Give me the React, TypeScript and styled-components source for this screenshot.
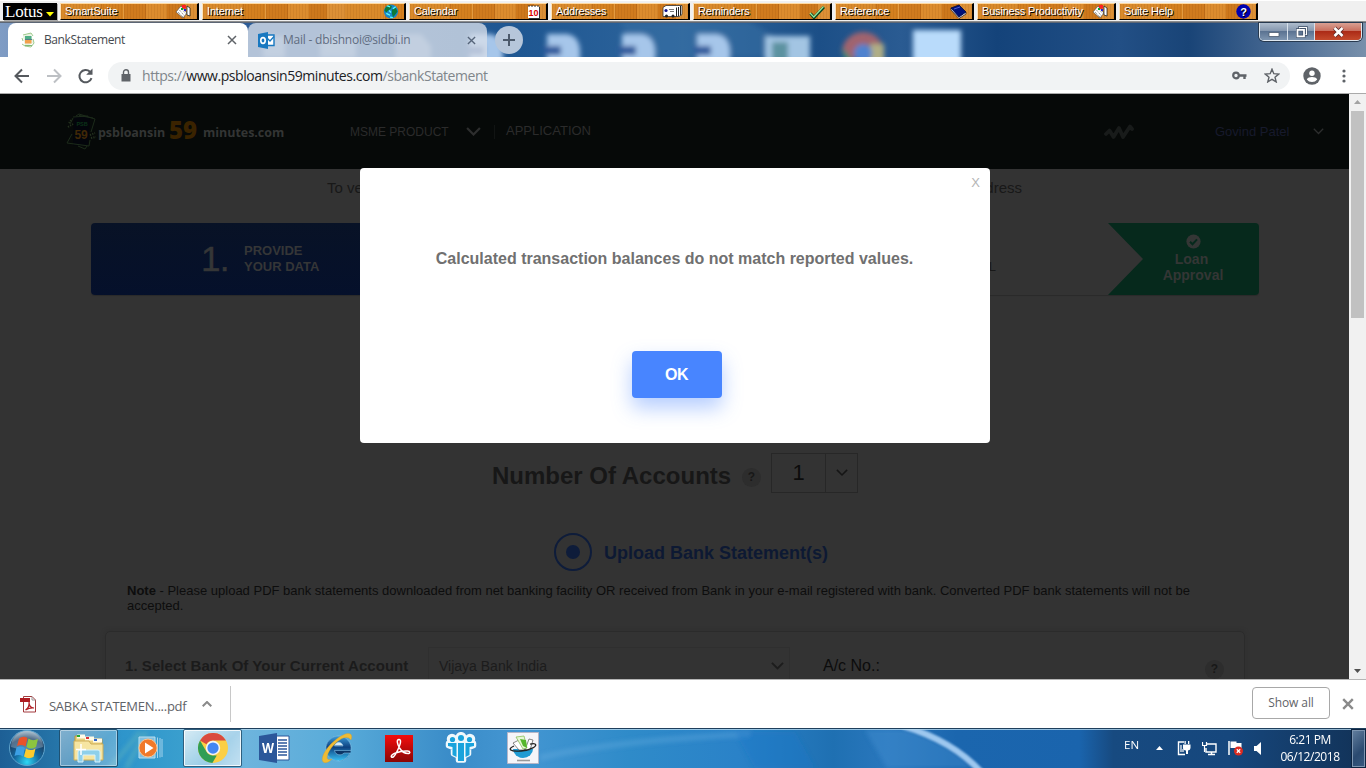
import React from "react";
import styled, { createGlobalStyle } from "styled-components";

const Global = createGlobalStyle`
  * { box-sizing: border-box; }
  body { margin: 0; overflow: hidden; background: #fff; }
  svg { display: block; flex: none; }
`;

const UI = `"Open Sans", "Noto Sans", sans-serif`;
const ARIAL = `"Liberation Sans", Arial, sans-serif`;

const Screen = styled.div`
  width: 1366px;
  height: 768px;
  display: flex;
  flex-direction: column;
  overflow: hidden;
  font-family: ${ARIAL};
`;

/* ---------- Lotus SmartCenter bar ---------- */

const LotusBar = styled.div`
  height: 22px;
  flex: none;
  display: flex;
  align-items: flex-start;
  gap: 3px;
  padding: 3px 0 0 3px;
  background: #f0f0f0;
  border-bottom: 1px solid #8d8d8d;
  box-shadow: inset 0 1px #fff;
`;

const LotusLogo = styled.div`
  width: 54px;
  height: 17px;
  display: flex;
  align-items: center;
  justify-content: space-between;
  padding: 0 3px 0 2px;
  background: #000;
  color: #fff;
  font: 17px/17px "Liberation Serif", serif;
  letter-spacing: -0.2px;
  box-shadow: 1px 1px #aaa;
`;

const Drawer = styled.div<{ $w?: number }>`
  width: ${(p) => p.$w ?? 139}px;
  height: 17px;
  display: flex;
  align-items: center;
  justify-content: space-between;
  padding: 0 5px 0 4px;
  color: #fff;
  font: 11px/15px ${ARIAL};
  letter-spacing: -0.18px;
  white-space: nowrap;
  text-shadow: 1px 1px #000;
  border: 1px solid;
  border-color: #ffd9a0 #000 #000 #ffe3b8;
  border-right-width: 2px;
  background:
    repeating-linear-gradient(90deg, rgba(110, 50, 0, 0.1) 0 1px, transparent 1px 3px),
    repeating-linear-gradient(
      90deg,
      #d98a2b 0 40px, #c4701a 40px 41px, #d4801f 41px 62px,
      #e39b40 62px 63px, #d07b1e 63px 84px, #c4701a 84px 85px,
      #dc8c2e 85px 106px, #cd781c 106px 124px, #dc9036 124px 142px
    );
`;

const Burst = () => (
  <svg width="17" height="15" viewBox="0 0 17 15">
    <path d="M1 8l5-6 6 7-4 5z" fill="#fff" stroke="#444" strokeWidth=".6" />
    <path d="M3 8l5 5M4.500 6l5 6M6 4l5 6" stroke="#444" strokeWidth=".7" strokeDasharray="1 1" />
    <path d="M7 1h4v3.500H7z" fill="#f22" /><path d="M6 4h2v2H6z" fill="#0a3" /><path d="M9 5h2v2H9z" fill="#22c" />
    <path d="M12 2l3 2v8l-3-1z" fill="#fff" stroke="#111" strokeWidth=".7" />
  </svg>
);
const Globe = () => (
  <svg width="16" height="15" viewBox="0 0 16 16">
    <circle cx="8" cy="8" r="7.600" fill="#1a87c8" />
    <path d="M2 4l4-3 3 1-1 3-3 2-2 2-2-2zM9 6l4-2 2 4-3 4-2 2-1-4z" fill="#0b7a3a" />
    <path d="M4 2l3 1M10 5l3-2M3 10l4 2M7 14l3 .5M6 7l2 2" stroke="#5ff" strokeWidth="1.400" />
  </svg>
);
const CalendarGlyph = () => (
  <svg width="14" height="15" viewBox="0 0 14 15">
    <path d="M2 3h11v12H2z" fill="#333" /><path d="M1 2h11v12H1z" fill="#fff" />
    <path d="M2 1v2M5 1v2M8 1v2M11 1v2" stroke="#333" />
    <text x="1.500" y="11.500" fontSize="9" fontWeight="bold" fontFamily="Liberation Sans" fill="#d00" letterSpacing="0" style={{ textShadow: "none" }}>10</text>
  </svg>
);
const CardsGlyph = () => (
  <svg width="21" height="13" viewBox="0 0 21 13">
    <path d="M4 .5h16v9l-3 2H1v-9z" fill="#fff" stroke="#333" strokeWidth=".8" />
    <path d="M14.500 2.500v9M16.500 2v9M18.500 1v9" stroke="#222" /><circle cx="4" cy="5.500" r="1.600" fill="#118" />
    <path d="M7 4.500h5M8 6.500h4" stroke="#777" /><circle cx="4.500" cy="11" r="1.500" fill="#222" /><circle cx="11" cy="11" r="1.500" fill="#222" />
  </svg>
);
const CheckGlyph = () => (
  <svg width="16" height="14" viewBox="0 0 16 14">
    <path d="M1.500 8.500L5 12.500 15 2" fill="none" stroke="#042" strokeWidth="3" />
    <path d="M1 8l3.800 4L14.500 1.500" fill="none" stroke="#9be89b" strokeWidth="1.200" />
  </svg>
);
const BookGlyph = () => (
  <svg width="17" height="15" viewBox="0 0 17 15">
    <path d="M1 4v2l8 8.500 7-4.500V8z" fill="#e6e6f0" stroke="#001" strokeWidth=".6" />
    <path d="M1 4l8-3 7 7-7 5z" fill="#00107a" stroke="#000838" strokeWidth=".8" />
    <path d="M4 5l6-2" stroke="#4a5ad0" />
  </svg>
);
const HelpGlyph = () => (
  <svg width="15" height="15" viewBox="0 0 15 15">
    <circle cx="7.500" cy="7.500" r="7.200" fill="#0000b0" />
    <text x="7.500" y="11.500" textAnchor="middle" fontSize="11" fontWeight="bold" fontFamily="Liberation Sans" fill="#fff">?</text>
  </svg>
);

const drawers: { name: string; w?: number; icon: React.ReactNode }[] = [
  { name: "SmartSuite", icon: <Burst /> },
  { name: "Internet", w: 204, icon: <Globe /> },
  { name: "Calendar", icon: <CalendarGlyph /> },
  { name: "Addresses", icon: <CardsGlyph /> },
  { name: "Reminders", icon: <CheckGlyph /> },
  { name: "Reference", icon: <BookGlyph /> },
  { name: "Business Productivity", icon: <Burst /> },
  { name: "Suite Help", icon: <HelpGlyph /> },
];

/* ---------- Browser frame ---------- */

const TabStrip = styled.div`
  position: relative;
  height: 35px;
  flex: none;
  display: flex;
  padding: 1px 4px 0 8px;
  isolation: isolate;
`;

const Backdrop = styled.svg`
  position: absolute;
  inset: 0;
  z-index: -1;
`;

const Tab = styled.div<{ $active?: boolean }>`
  width: ${(p) => (p.$active ? 240 : 239)}px;
  height: 34px;
  display: flex;
  align-items: center;
  padding: 0 11px 0 ${(p) => (p.$active ? 12 : 10)}px;
  border-radius: 8px 8px 0 0;
  background: ${(p) => (p.$active ? "#fff" : "rgba(214, 221, 232, 0.8)")};
  color: ${(p) => (p.$active ? "#45494e" : "#5f6c80")};
  & > svg:last-child { margin-left: auto; }
`;

const TabTitle = styled.span<{ $ls: number }>`
  margin-left: 8px;
  font: 12px/16px ${UI};
  letter-spacing: ${(p) => p.$ls}px;
  white-space: nowrap;
`;

const NewTab = styled.div`
  width: 28px;
  height: 28px;
  margin: 3px 0 0 8px;
  display: grid;
  place-items: center;
  border-radius: 50%;
  background: #b6c6da;
`;

const WindowButtons = styled.div`
  display: flex;
  width: 103px;
  height: 18px;
  margin-left: auto;
  border: 1px solid #e0e8f0;
  border-top: 0;
  border-radius: 0 0 5px 5px;
  overflow: hidden;
  box-shadow: 0 0 0 1px #27394f;
`;

const WinBtn = styled.div<{ $w: number; $close?: boolean }>`
  width: ${(p) => p.$w}px;
  display: grid;
  place-items: center;
  border-right: ${(p) => (p.$close ? 0 : "1px solid #d7e0ea")};
  background: ${(p) =>
    p.$close
      ? "linear-gradient(#d9a093 0, #c9705f 45%, #ac2b17 50%, #c44a2c 100%)"
      : "linear-gradient(#aebccd 0, #8799b0 45%, #5b7392 50%, #7e95b0 100%)"};
`;

const Toolbar = styled.div`
  height: 37px;
  flex: none;
  display: flex;
  align-items: center;
  padding: 1px 12px 0 13px;
  background: #fff;
  border-bottom: 1px solid #aaa;
  & > svg { margin-right: 14px; }
  & > svg:last-child { margin-right: 0; }
`;

const Omnibox = styled.div`
  width: 1182px;
  height: 28px;
  flex: none;
  display: flex;
  align-items: center;
  padding: 0 10px 0 13px;
  margin-right: 13px;
  border-radius: 14px;
  background: #f1f3f4;
  color: #80868b;
  font: 14px/20px ${UI};
`;

const Url = styled.span`
  margin: 0 auto 0 11px;
  letter-spacing: -0.44px;
  white-space: nowrap;
  b { font-weight: 400; color: #202124; }
`;

/* ---------- Web page ---------- */

const Viewport = styled.div`
  position: relative;
  height: 585px;
  flex: none;
  display: flex;
`;

const Page = styled.div`
  width: 1349px;
  height: 585px;
  overflow: hidden;
  background: #333;
`;

const Scrollbar = styled.div`
  width: 17px;
  display: flex;
  flex-direction: column;
  align-items: center;
  justify-content: space-between;
  padding: 6px 0;
  background: #f1f1f1;
`;

const Thumb = styled.div`
  width: 13px;
  height: 207px;
  margin: 7px 0 auto;
  background: #c1c1c1;
`;

const SiteHeader = styled.header`
  height: 75px;
  display: flex;
  align-items: center;
  padding: 0 24px 0 66px;
  background: #060908;
  color: #2d2e2e;
  white-space: nowrap;
`;

const Brand = styled.div`
  width: 284px;
  display: flex;
  align-items: center;
  font: bold 12.5px/20px ${UI};
  letter-spacing: -0.05px;
  color: #333534;
  & > svg { margin-right: 1px; }
  & > span { margin-top: 2px; }
`;

const BrandNumber = styled.b`
  width: 31px;
  margin: -3px 3px 0 4px;
  font: 800 24px/24px ${UI};
  color: #3a2300;
`;

const NavItem = styled.span<{ $size?: number; $w: number; $color?: string }>`
  width: ${(p) => p.$w}px;
  font-size: ${(p) => p.$size ?? 12}px;
  color: ${(p) => p.$color ?? "#2b2b2b"};
`;

const NavDivider = styled.i`
  width: 1px;
  height: 14px;
  margin: 0 11px 0 13px;
  background: #111413;
`;

const Intro = styled.p`
  display: flex;
  justify-content: space-between;
  width: 695px;
  height: 54px;
  margin: 0 0 0 327px;
  padding-top: 10px;
  font-size: 15px;
  line-height: 18px;
  color: #181818;
`;

const Steps = styled.div`
  display: flex;
  width: 1168px;
  height: 72px;
  margin-left: 91px;
  border-radius: 4px;
  overflow: hidden;
  box-shadow: 0 1px 1px #2a2a2a;
`;

const StepCurrent = styled.div`
  width: 420px;
  display: flex;
  align-items: center;
  padding-left: 110px;
  background: linear-gradient(#081226, #05102b);
  color: #353637;
`;

const StepNumber = styled.span`
  width: 43px;
  font-size: 35px;
  line-height: 36px;
  letter-spacing: -0.8px;
  -webkit-text-stroke: 0.4px;
`;

const StepLabel = styled.span`
  font: bold 13px/16px ${ARIAL};
  margin-bottom: 1px;
`;

const StepPlain = styled.div`
  flex: 1;
  display: flex;
  align-items: flex-end;
  justify-content: flex-end;
  padding: 0 112px 21px 0;
  font-size: 13px;
  line-height: 15px;
  color: #181818;
`;

const StepApproval = styled.div`
  width: 151px;
  display: flex;
  flex-direction: column;
  align-items: center;
  padding: 11px 0 0 19px;
  background: #06291c;
  color: #343635;
  clip-path: polygon(0 0, 100% 0, 100% 100%, 0 100%, 35px 50%);
  font: bold 14px/16px ${ARIAL};
  text-align: center;
  span { margin: 2px 3px 0 0; }
  span + span { margin: 0; }
`;

const AccountRow = styled.div`
  display: flex;
  align-items: center;
  height: 40px;
  margin: 158px 0 0 492px;
`;

const Heading = styled.h2`
  width: 250px;
  margin: 5px 0 0;
  font-size: 24px;
  line-height: 30px;
  color: #171717;
  white-space: nowrap;
`;

const Hint = styled.span`
  width: 19px;
  height: 19px;
  border-radius: 50%;
  background: #2d2d2d;
  color: #181818;
  font: bold 12px/18px ${ARIAL};
  text-align: center;
`;

const CountSelect = styled.div`
  display: flex;
  width: 87px;
  height: 40px;
  margin-left: 10px;
  border: 1px solid #272727;
  color: #0c0c0c;
  & > * { display: grid; place-items: center; }
`;

const CountValue = styled.span`
  width: 54px;
  font-size: 22px;
  border-right: 1px solid #272727;
`;

const CountArrow = styled.span`
  flex: 1;
  color: #151515;
`;

const UploadRow = styled.div`
  display: flex;
  align-items: center;
  gap: 12px;
  height: 38px;
  margin: 40px 0 0 554px;
  color: #0d1933;
  font: bold 18px/22px ${ARIAL};
  span + span { margin-top: 2px; }
`;

const Radio = styled.span`
  width: 38px;
  height: 38px;
  display: grid;
  place-items: center;
  border: 2px solid #0e1c3a;
  border-radius: 50%;
  &::after {
    content: "";
    width: 14px;
    height: 14px;
    border-radius: 50%;
    background: #0e1c3a;
  }
`;

const Note = styled.p`
  width: 1090px;
  margin: 12px 0 0 127px;
  font-size: 13px;
  line-height: 15px;
  color: #0d0d0d;
`;

const BankCard = styled.div`
  display: flex;
  align-items: flex-start;
  width: 1140px;
  height: 90px;
  margin: 18px 0 0 105px;
  padding: 15px 20px 0 19px;
  border: 1px solid #2b2b2b;
  border-radius: 5px;
  box-shadow: 0 0 4px #2e2e2e;
  line-height: 38px;
  white-space: nowrap;
`;

const BankLabel = styled.span`
  width: 303px;
  font-weight: bold;
  font-size: 15px;
  letter-spacing: 0.05px;
  color: #1b1b1b;
`;

const BankSelect = styled.div`
  display: flex;
  align-items: center;
  justify-content: space-between;
  width: 362px;
  height: 38px;
  margin-right: 33px;
  padding: 0 5px 0 10px;
  border: 1px solid #2f2f2f;
  font-size: 14px;
  color: #1c1c1c;
`;

const AccountLabel = styled.span`
  font-size: 16px;
  color: #0c0c0c;
  margin-right: auto;
`;

const Modal = styled.div`
  position: absolute;
  left: 360px;
  top: 74px;
  width: 630px;
  height: 275px;
  display: flex;
  flex-direction: column;
  align-items: center;
  border-radius: 4px;
  background: #fff;
`;

const ModalClose = styled.span`
  align-self: flex-end;
  height: 30px;
  margin-right: 10px;
  padding-top: 6px;
  font: 13px/18px ${ARIAL};
  color: #b5b5b5;
`;

const ModalText = styled.p`
  height: 102px;
  margin: 51px 1px 0 0;
  font: bold 16px/20px ${ARIAL};
  color: #707070;
`;

const OkButton = styled.button`
  width: 90px;
  height: 47px;
  margin-left: 4px;
  padding: 0 1px 0 0;
  border: 0;
  border-radius: 4px;
  background: #4885ff;
  color: #fff;
  font: bold 16px/20px ${ARIAL};
  letter-spacing: -0.6px;
  box-shadow: 0 10px 20px rgba(72, 133, 255, 0.4);
`;

/* ---------- Download shelf ---------- */

const Shelf = styled.div`
  height: 49px;
  flex: none;
  display: flex;
  align-items: center;
  padding: 0 12px 0 20px;
  border-top: 1px solid #b5b5b5;
  background: #fff;
  color: #5f6368;
`;

const FileName = styled.span`
  width: 152px;
  margin: 4px 0 0 13px;
  font: 13px/18px ${UI};
  letter-spacing: -0.26px;
  white-space: nowrap;
`;

const ShelfDivider = styled.i`
  width: 1px;
  height: 36px;
  margin-left: 18px;
  background: #c8c8c8;
`;

const ShowAll = styled.button`
  width: 78px;
  height: 32px;
  margin: 0 12px 2px auto;
  padding: 0;
  border: 1px solid #a8a8a8;
  border-radius: 4px;
  background: #fff;
  color: #5f6368;
  font: 500 12px/16px ${UI};
  letter-spacing: -0.1px;
`;

/* ---------- Windows taskbar ---------- */

const Taskbar = styled.div`
  position: relative;
  height: 40px;
  flex: none;
  display: flex;
  align-items: center;
  padding: 0 0 0 8px;
  isolation: isolate;
`;

const TaskSlot = styled.div<{ $lit?: number }>`
  width: 59px;
  height: 38px;
  margin-right: 3px;
  display: grid;
  place-items: center;
  border-radius: 2px;
  ${(p) =>
    p.$lit
      ? `border: 1px solid ${p.$lit > 0.5 ? "#2e5f7f" : "#1f5273"};
         box-shadow: inset 0 0 0 1px rgba(255,255,255,${p.$lit});
         background: linear-gradient(135deg, rgba(255,255,255,${p.$lit}), rgba(255,255,255,${p.$lit * 0.55}) 60%, rgba(255,255,255,${p.$lit * 0.75}));`
      : ""}
`;

const StartOrb = styled.div`
  width: 51px;
`;

const Tray = styled.div`
  display: flex;
  align-items: center;
  margin-left: auto;
  height: 39px;
  color: #fff;
  font: 12px/16px ${UI};
`;

const Lang = styled.span`
  width: 32px;
  font-size: 11.5px;
  margin-bottom: 6px;
`;

const TrayIcons = styled.div`
  display: flex;
  align-items: center;
  width: 124px;
  gap: 11px;
`;

const Clock = styled.div`
  width: 60px;
  margin-right: 11px;
  text-align: center;
  letter-spacing: -0.45px;
  line-height: 17px;
  white-space: nowrap;
`;

const ShowDesktop = styled.div`
  width: 15px;
  height: 39px;
  border: 1px solid #0c2340;
  box-shadow: inset 0 0 0 1px #7d95b0;
  background: linear-gradient(135deg, #64809f, #2b4a70 60%, #38597f);
`;

const Chevron = ({ w, sw = 2, up }: { w: number; sw?: number; up?: boolean }) => (
  <svg width={w} height={w * 0.6} viewBox="0 0 14 8.4">
    <path d={up ? "M1 7.4l6-6 6 6" : "M1 1l6 6 6-6"} fill="none" stroke="currentColor" strokeWidth={(sw * 14) / w} />
  </svg>
);

const Cross = ({ s, sw, c }: { s: number; sw: number; c: string }) => (
  <svg width={s} height={s} viewBox="0 0 10 10">
    <path d="M1 1l8 8M9 1L1 9" stroke={c} strokeWidth={sw} />
  </svg>
);

const ChromeLogo = ({ s }: { s: number }) => (
  <svg width={s} height={s} viewBox="-24 -24 48 48">
    <circle r="24" fill="#fbcf45" />
    <path d="M-20.8-12A24 24 0 0 1 20.8-12H0A12 12 0 0 0-10.4-6z" fill="#d94b3f" />
    <path d="M-20.8-12L-10.4 6A12 12 0 0 0 0 12h6L-1 24A24 24 0 0 1-20.8-12z" fill="#2f9e55" />
    <circle r="11.5" fill="#f5f5f5" />
    <circle r="9" fill="#4486f2" />
  </svg>
);

const BlurDoc = ({ x }: { x: number }) => (
  <g>
    <path d={`M${x} 12h20q12 2 13 16v12h-33z`} fill="#a6c6ea" />
    <path d={`M${x - 3} 24h17v9h-17z`} fill="#2d5a9c" />
  </g>
);

export default function App() {
  return (
    <>
      <Global />
      <Screen>
        <LotusBar>
          <LotusLogo>
            <span>Lotus</span>
            <svg width="8" height="5" viewBox="0 0 8 5" style={{ marginTop: 5 }}><path d="M0 0h8L4 4.5z" fill="#ff0" /></svg>
          </LotusLogo>
          {drawers.map((d) => (
            <Drawer key={d.name} $w={d.w}>
              <span>{d.name}</span>
              {d.icon}
            </Drawer>
          ))}
        </LotusBar>

        <TabStrip>
          <Backdrop width="1366" height="35" viewBox="0 0 1366 35">
            <defs>
              <linearGradient id="frame">
                <stop offset="0" stopColor="#7f9cc4" />
                <stop offset=".18" stopColor="#2c5c97" />
                <stop offset=".38" stopColor="#1f5792" />
                <stop offset=".5" stopColor="#2e659c" />
                <stop offset=".6" stopColor="#1c4f87" />
                <stop offset=".66" stopColor="#2a5b92" />
                <stop offset=".73" stopColor="#14437a" />
                <stop offset=".82" stopColor="#224f85" />
                <stop offset=".87" stopColor="#194477" />
                <stop offset=".94" stopColor="#4a6b94" />
                <stop offset="1" stopColor="#7890ab" />
              </linearGradient>
              <filter id="soft" x="-20%" y="-50%" width="140%" height="200%"><feGaussianBlur stdDeviation="2.6" /></filter>
            </defs>
            <rect width="1366" height="35" fill="url(#frame)" />
            <g filter="url(#soft)">
              <path d="M620 0h130l60 35H640z" fill="#3a70a5" opacity=".5" />
              <BlurDoc x={470} /><BlurDoc x={547} /><BlurDoc x={622} /><BlurDoc x={697} />
              <path d="M263 14h22v22h-22zM320 14h36v22h-36zM395 12h26l10 12v14h-36z" fill="#d8e4f2" opacity=".45" />
              <path d="M765 14h45v26h-45z" fill="#a3c5e3" /><path d="M772 20h16v20h-16z" fill="#5b92a0" />
              <path d="M842 31a21 21 0 0 1 40-9l-19 2-10 14z" fill="#a0646e" />
              <path d="M842 25l12 15h-9z" fill="#3f8a75" /><path d="M870 22h14v18h-14z" fill="#b0ae85" />
              <circle cx="863" cy="31" r="9" fill="#4f82cf" />
              <path d="M913 8h48v34h-48z" fill="#b9dbfb" />
            </g>
            <path d="M0 0h1366v1H0z" fill="#5c6675" />
          </Backdrop>
          <Tab $active>
            <svg width="16" height="16" viewBox="0 0 16 16">
              <path d="M3 4l8-3 2 10-8 4z" fill="#e8f2e0" />
              <path d="M3 3l8-2 2 3M2 6l1 3M13 7l1 4-3 4-6-1-3-2" fill="none" stroke="#9cc98a" />
              <path d="M5 4h6.500v3H5z" fill="#4fae86" /><path d="M5 8h6.500v3.500H5z" fill="#f2a04c" /><path d="M5 7h7v1H5z" fill="#557a8a" />
              <path d="M5 13.500h7" stroke="#7fb87a" />
            </svg>
            <TabTitle $ls={-0.4}>BankStatement</TabTitle>
            <Cross s={10} sw={1.5} c="#5f6368" />
          </Tab>
          <Tab>
            <svg width="17" height="17" viewBox="0 0 17 17">
              <path d="M8 3h8v10.500H8z" fill="#fff" stroke="#1878c0" strokeWidth="1.400" />
              <path d="M9 6l3 3L16 4.500" fill="none" stroke="#1878c0" strokeWidth="1.300" />
              <path d="M0 2l10-2v17L0 15z" fill="#1878c0" />
              <ellipse cx="5" cy="8.500" rx="2.200" ry="2.900" fill="none" stroke="#fff" strokeWidth="1.600" />
            </svg>
            <TabTitle $ls={-0.22}>Mail - dbishnoi@sidbi.in</TabTitle>
            <Cross s={9} sw={1.5} c="#56657a" />
          </Tab>
          <NewTab>
            <svg width="12" height="12" viewBox="0 0 12 12"><path d="M6 0v12M0 6h12" stroke="#4c5a6c" strokeWidth="2" /></svg>
          </NewTab>
          <WindowButtons>
            <WinBtn $w={28}>
              <svg width="12" height="12" viewBox="0 0 12 12"><path d="M1 6.500h10v4H1z" fill="#fff" stroke="#4a5a70" strokeWidth=".8" /></svg>
            </WinBtn>
            <WinBtn $w={27}>
              <svg width="13" height="12" viewBox="0 0 13 12">
                <path d="M4.500 1.500h7v7h-7z" fill="none" stroke="#3d4e66" strokeWidth="2.600" /><path d="M4.500 1.500h7v7h-7z" fill="none" stroke="#fff" strokeWidth="1.200" />
                <path d="M2.500 3.800h6.500v6.500H2.500z" fill="#5b7392" stroke="#3d4e66" strokeWidth="3" /><path d="M2.500 3.800h6.500v6.500H2.500z" fill="none" stroke="#fff" strokeWidth="1.800" />
              </svg>
            </WinBtn>
            <WinBtn $w={46} $close>
              <svg width="13" height="12" viewBox="0 0 13 12">
                <path d="M2.500 2l8 8M10.500 2l-8 8" stroke="#5c2a2a" strokeWidth="4.200" /><path d="M2.500 2l8 8M10.500 2l-8 8" stroke="#fff" strokeWidth="2.600" />
              </svg>
            </WinBtn>
          </WindowButtons>
        </TabStrip>

        <Toolbar>
          <svg width="18" height="18" viewBox="0 0 18 18"><path d="M16 9H3M9 2.500L2.500 9 9 15.500" fill="none" stroke="#55595e" strokeWidth="2" /></svg>
          <svg width="18" height="18" viewBox="0 0 18 18"><path d="M2 9h13M9 2.500L15.500 9 9 15.500" fill="none" stroke="#bdc0c4" strokeWidth="2" /></svg>
          <svg width="17" height="18" viewBox="0 0 17 18">
            <path d="M14.500 11.200A6.200 6.200 0 1 1 13 4.700" fill="none" stroke="#55595e" strokeWidth="2" /><path d="M15.500 1.500v6.300H9.200z" fill="#55595e" />
          </svg>
          <Omnibox>
            <svg width="10" height="13" viewBox="0 0 10 13"><path d="M.5 5h9v7.500h-9z" fill="#5f6368" /><path d="M2.500 5V3.200a2.500 2.500 0 0 1 5 0V5" fill="none" stroke="#5f6368" strokeWidth="1.400" /></svg>
            <Url>https://<b>www.psbloansin59minutes.com</b>/sbankStatement</Url>
            <svg width="15" height="9" viewBox="0 0 15 9" style={{ marginRight: 17 }}>
              <circle cx="4" cy="4.500" r="2.800" fill="none" stroke="#5f6368" strokeWidth="2.200" /><path d="M7 4.500h7.500M12.500 4.500v3.500" stroke="#5f6368" strokeWidth="2.400" />
            </svg>
            <svg width="16" height="15" viewBox="0 0 16 15"><path d="M8 1.200l1.800 4.500 4.900.4-3.700 3.100 1.200 4.700L8 11.300l-4.200 2.600L5 9.200 1.300 6.100l4.900-.4z" fill="none" stroke="#5f6368" strokeWidth="1.400" /></svg>
          </Omnibox>
          <svg width="18" height="18" viewBox="0 0 18 18">
            <circle cx="9" cy="9" r="8.700" fill="#5f6368" /><circle cx="9" cy="6.300" r="2.700" fill="#fff" /><path d="M3.800 12.500c1.500-3.200 8.900-3.200 10.400 0a6.500 6.500 0 0 1-10.400 0z" fill="#fff" />
          </svg>
          <svg width="18" height="16" viewBox="0 0 18 16"><g fill="#5f6368"><circle cx="9" cy="3" r="1.600" /><circle cx="9" cy="8" r="1.600" /><circle cx="9" cy="13" r="1.600" /></g></svg>
        </Toolbar>

        <Viewport>
          <Page>
            <SiteHeader>
              <Brand>
                <svg width="31" height="37" viewBox="0 0 31 37">
                  <path d="M8 3.500h16l-2 29H7z" fill="#03050b" />
                  <g fill="none" stroke="#1c2b1a">
                    <path d="M7 4l15-1M10 3l3-2 16 5-4 13M13 2.500l14 2.500M4 11l3-6M6 21l-5 9 22 3 1-6M12 33l7 3 2-3" />
                  </g>
                  <path d="M3 10l3-4M2 14l5-3M24 22l5-2M25 25l5-1" stroke="#25321f" strokeDasharray="1.200 1.200" strokeWidth="2" />
                  <text x="10.500" y="13" fontSize="5.500" fontWeight="bold" fontFamily="Liberation Sans" fill="#0b3318">PSB</text>
                  <text x="8.500" y="26" fontSize="12" fontWeight="bold" fontFamily="Liberation Sans" fill="#402806">59</text>
                </svg>
                <span>psbloansin</span><BrandNumber>59</BrandNumber><span>minutes.com</span>
              </Brand>
              <NavItem $w={116}>MSME PRODUCT</NavItem>
              <Chevron w={15} sw={2.2} />
              <NavDivider />
              <NavItem $w={598} $size={13} style={{ marginTop: -2 }}>APPLICATION</NavItem>
              <svg width="30" height="16" viewBox="0 0 30 16"><path d="M2 10l3.500-3.500 4 6.500L15 4l4 9 7-10.500 2 2.500" fill="none" stroke="#181b1a" strokeWidth="3.800" strokeLinejoin="round" strokeLinecap="round" /></svg>
              <NavItem $w={98} $size={13} $color="#171a2c" style={{ marginLeft: 81 }}>Govind Patel</NavItem>
              <Chevron w={11} sw={1.3} />
            </SiteHeader>
            <Intro><span>To ve</span><span>dress</span></Intro>
            <Steps>
              <StepCurrent>
                <StepNumber>1.</StepNumber>
                <StepLabel>PROVIDE<br />YOUR DATA</StepLabel>
              </StepCurrent>
              <StepPlain>L</StepPlain>
              <StepApproval>
                <svg width="15" height="15" viewBox="0 0 15 15"><circle cx="7.500" cy="7.500" r="7.100" fill="#343635" /><path d="M4 7.700l2.500 2.500 4.500-4.800" fill="none" stroke="#06291c" strokeWidth="2" /></svg>
                <span>Loan</span><span>Approval</span>
              </StepApproval>
            </Steps>
            <AccountRow>
              <Heading>Number Of Accounts</Heading>
              <Hint style={{ marginTop: 9 }}>?</Hint>
              <CountSelect>
                <CountValue>1</CountValue>
                <CountArrow><Chevron w={12} sw={1.500} /></CountArrow>
              </CountSelect>
            </AccountRow>
            <UploadRow><Radio /><span>Upload Bank Statement(s)</span></UploadRow>
            <Note>
              <b>Note</b> - Please upload PDF bank statements downloaded from net banking facility OR received from Bank in your e-mail registered with bank. Converted PDF bank statements will not be accepted.
            </Note>
            <BankCard>
              <BankLabel>1. Select Bank Of Your Current Account</BankLabel>
              <BankSelect><span>Vijaya Bank India</span><Chevron w={13} sw={1.800} /></BankSelect>
              <AccountLabel>A/c No.:</AccountLabel>
              <Hint style={{ marginTop: 13 }}>?</Hint>
            </BankCard>
          </Page>
          <Scrollbar>
            <svg width="7" height="4" viewBox="0 0 7 4"><path d="M0 4h7L3.500 0z" fill="#a3a3a3" /></svg>
            <Thumb />
            <svg width="7" height="4" viewBox="0 0 7 4"><path d="M0 0h7L3.500 4z" fill="#505050" /></svg>
          </Scrollbar>
          <Modal>
            <ModalClose>X</ModalClose>
            <ModalText>Calculated transaction balances do not match reported values.</ModalText>
            <OkButton>OK</OkButton>
          </Modal>
        </Viewport>

        <Shelf>
          <svg width="16" height="17" viewBox="0 0 16 17">
            <path d="M3.500.5h8.500l3.500 3.500v12h-12z" fill="#fff" stroke="#a33b3e" /><path d="M12 .5V4h3.500" fill="none" stroke="#999" />
            <path d="M0 2h10v4H0z" fill="#b01c22" /><path d="M5.500 14c3-2 4-5 3.500-8 0 4 2 6 5 6-3-.5-6 .5-8.500 2z" fill="none" stroke="#b01c22" strokeWidth="1.200" />
          </svg>
          <FileName>SABKA STATEMEN....pdf</FileName>
          <span style={{ color: "#8a8a8a", marginLeft: 1 }}><Chevron w={10} sw={2} up /></span>
          <ShelfDivider />
          <ShowAll>Show all</ShowAll>
          <Cross s={12} sw={2} c="#8a8a8a" />
        </Shelf>

        <Taskbar>
          <Backdrop width="1366" height="40" viewBox="0 0 1366 40">
            <defs>
              <linearGradient id="bar">
                <stop offset="0" stopColor="#1d5f95" />
                <stop offset=".04" stopColor="#2574a8" />
                <stop offset=".09" stopColor="#2e95cb" />
                <stop offset=".135" stopColor="#3a9fce" />
                <stop offset=".18" stopColor="#6db4dd" />
                <stop offset=".25" stopColor="#58abd9" />
                <stop offset=".33" stopColor="#3a8cc8" />
                <stop offset=".38" stopColor="#4496d2" />
                <stop offset=".46" stopColor="#2f8bc9" />
                <stop offset=".54" stopColor="#2a82c8" />
                <stop offset=".61" stopColor="#1f70b2" />
                <stop offset=".65" stopColor="#2a77bd" />
                <stop offset=".7" stopColor="#1b66ae" />
                <stop offset=".79" stopColor="#1a64ad" />
                <stop offset=".815" stopColor="#174a80" />
                <stop offset=".9" stopColor="#16477d" />
                <stop offset="1" stopColor="#123257" />
              </linearGradient>
              <filter id="haze" x="-20%" y="-50%" width="140%" height="200%"><feGaussianBlur stdDeviation="2" /></filter>
              <filter id="glow" x="-20%" y="-20%" width="140%" height="140%"><feGaussianBlur stdDeviation="1.300" /></filter>
            </defs>
            <rect width="1366" height="40" fill="url(#bar)" />
            <g filter="url(#haze)">
              <path d="M110 40l30-36M126 40l20-36" stroke="#7cc6b8" strokeWidth="4" opacity=".35" />
              <path d="M540 30q60-16 210-24" stroke="#7fc0ea" strokeWidth="6" opacity=".25" fill="none" />
              <path d="M735 4h60l20 36h-60z" fill="#1e79c8" opacity=".4" />
              <path d="M865 2h40q50 16 66 38h-84z" fill="#4590d2" opacity=".4" />
            </g>
            <path d="M903-2q50 15 78 46" stroke="#a5cdf3" strokeWidth="6.500" opacity=".95" fill="none" filter="url(#glow)" />
            <path d="M0 0h1366v1H0z" fill="#1f3f5c" /><path d="M0 1h1366v1H0z" fill="#b5d8ee" opacity=".8" />
          </Backdrop>
          <StartOrb>
            <svg width="38" height="38" viewBox="0 0 38 38">
              <defs><radialGradient id="orb" cx=".5" cy=".9" r=".9"><stop offset="0" stopColor="#2fd8f5" /><stop offset=".4" stopColor="#14689f" /><stop offset=".75" stopColor="#1b3f63" /><stop offset="1" stopColor="#9fb9cb" /></radialGradient></defs>
              <circle cx="19" cy="19" r="17.500" fill="url(#orb)" stroke="#5fa4cd" />
              <path d="M3 18a16 16 0 0 1 32 0q-16 6-32 0z" fill="#fff" opacity=".25" />
              <path d="M11 9.500q4-3 8.500-.5l-2 8.500q-4-2.500-8.500-.5z" fill="#e8532a" /><path d="M20.500 9.500q4 3 9.500.5l-2 8q-5 3-9.500 0z" fill="#8cc63f" />
              <path d="M8.500 18.500q4.500-2 8.500.5l-2 8.500q-4-2.500-8.500-.5z" fill="#3c9fe4" /><path d="M18 19.500q4.500 3 9.500 0l-2 8.500q-5 2.500-9.500-.5z" fill="#fccb2d" />
            </svg>
          </StartOrb>
          <TaskSlot $lit={0.42}>
            <svg width="34" height="30" viewBox="0 0 34 30">
              <path d="M3 3h9l2 3h16v20H3z" fill="#e9cf7c" stroke="#b8963f" /><path d="M5 1.500h8v4H5zM13 3.500h9v4h-9zM21 5.500h9v4h-9z" fill="#fffbe8" />
              <path d="M5 2h3v2H5z" fill="#2a3" /><path d="M14 4h3v2h-3z" fill="#d33" /><path d="M22 6h3v2h-3z" fill="#36c" />
              <path d="M2 8h15l2 3h12v16H2z" fill="#f6e5a2" stroke="#cdae58" />
              <path d="M6 29V19q0-2 2-2h18q2 0 2 2v10h-5v-7H11v7z" fill="#8fd0ea" stroke="#d8f2fc" /><path d="M9 11v11M4 16.500h10" stroke="#fff" strokeWidth="1.500" />
            </svg>
          </TaskSlot>
          <TaskSlot>
            <svg width="28" height="26" viewBox="0 0 28 26">
              <path d="M2 2h16v21H2z" fill="#7fbfe0" stroke="#b7def0" /><path d="M20.500 2.500v20.500M23 3v19.500M25 4v18" stroke="#a5d3ec" />
              <circle cx="11" cy="13" r="9" fill="#f0792a" stroke="#fbc48f" /><path d="M8 7.500l8.500 5.500L8 18.500z" fill="#fff" />
            </svg>
          </TaskSlot>
          <TaskSlot $lit={0.8}><ChromeLogo s={30} /></TaskSlot>
          <TaskSlot>
            <svg width="31" height="30" viewBox="0 0 31 30">
              <path d="M17 3h13v24H17z" fill="#fff" stroke="#2b579a" /><path d="M19 7h9M19 10h9M19 13h9M19 16h9M19 19h9M19 22h9" stroke="#2b579a" strokeWidth="1.300" />
              <path d="M0 3l18-3v30L0 27z" fill="#2b579a" />
              <text x="9" y="20" textAnchor="middle" fontSize="13.500" fontWeight="bold" fontFamily="Open Sans" fill="#fff" textLength="12" lengthAdjust="spacingAndGlyphs">W</text>
            </svg>
          </TaskSlot>
          <TaskSlot>
            <svg width="32" height="32" viewBox="0 0 32 32">
              <defs><linearGradient id="ie" x2="0" y2="1"><stop offset="0" stopColor="#3c9ddb" /><stop offset=".45" stopColor="#0d4180" /><stop offset="1" stopColor="#39c0f2" /></linearGradient></defs>
              <circle cx="17.500" cy="16.500" r="12.500" fill="#0b3566" />
              <path d="M13 13.500h9.500c-.5-5-8.500-5-9.500 0z" fill="#d5e9f5" />
              <path fillRule="evenodd" d="M17.500 4a12.500 12.500 0 0 1 12.500 14.500H13.500c1 5 7 5.500 9.500 2.500h6A12.500 12.500 0 1 1 17.500 4zM13.500 14h8.500c-1-5-7.500-5-8.500 0z" fill="url(#ie)" stroke="#9ad5f5" strokeWidth=".5" />
              <path d="M30 8c3-8-4-9-15-.5C4 16-2 28 3 30.500c2.500 1 5.500-1 8-3.500C6 29 4 26 9 18 14 10 25 1 30 8z" fill="#eebb34" stroke="#d29a20" strokeWidth=".3" />
            </svg>
          </TaskSlot>
          <TaskSlot>
            <svg width="28" height="27" viewBox="0 0 28 27">
              <defs><linearGradient id="pdf" x2="0" y2="1"><stop offset="0" stopColor="#f50d0d" /><stop offset="1" stopColor="#8a0505" /></linearGradient></defs>
              <path d="M0 0h28v27H0z" fill="url(#pdf)" />
              <path d="M14 4.500c-3 0-1.500 5 .5 8.500 2.500 4 5.500 5.500 8.500 5.500 2.500 0 2.500-2.300-.5-2.500-4-.3-8 .5-12 2-3 1.100-5 3-4 4s3-.5 5-4.500c2-4 3.800-7.500 4-10.500.1-1.500-.4-2.500-1.500-2.500z" fill="none" stroke="#fff" strokeWidth="1.500" />
            </svg>
          </TaskSlot>
          <TaskSlot>
            <svg width="32" height="32" viewBox="0 0 32 32">
              <g fill="#19a3dc" stroke="#eff8fc" strokeWidth="4.500" strokeLinejoin="round">
                <path d="M3 11h9v13l-4-2v-6l-5-2zM29 11h-9v13l4-2v-6l5-2zM13 11h6v17.500h-6z" /><circle cx="7" cy="7" r="3" /><circle cx="25" cy="7" r="3" /><circle cx="16" cy="5.500" r="3.300" />
              </g>
              <g fill="#19a3dc"><path d="M3 11h8.500v14l-4-2v-8L3 14zM29 11h-8.500v14l4-2v-8l4.500-1zM13 11h6v18h-6z" /><circle cx="7.500" cy="7.500" r="2.600" /><circle cx="24.500" cy="7.500" r="2.600" /><circle cx="16" cy="6" r="3" /></g>
            </svg>
          </TaskSlot>
          <TaskSlot>
            <svg width="32" height="32" viewBox="0 0 32 32">
              <path d="M.5.5h31v31H.5z" fill="#f5f5f9" stroke="#b5b6c8" />
              <path d="M6 17a10 9 0 0 0 20 0z" fill="#1f9bd3" />
              <path d="M6 11l6-3 6 10h-6zM26 8l-3 10h-5l4-11z" fill="#fff" stroke="#555" strokeWidth=".7" />
              <path d="M9 5l8-1 3 12-4 1z" fill="#e6f6d6" stroke="#8abf5a" strokeWidth=".8" /><path d="M13 7l6 1 1 8-4-2z" fill="#55b72c" />
              <path d="M7 14c-7 3-4 6 7 5 10-1 17-5 14-7-1-.6-3-.4-5 .2" fill="none" stroke="#222" strokeWidth="1.300" /><path d="M10 28.500h13" stroke="#999" strokeWidth="1.600" />
            </svg>
          </TaskSlot>
          <Tray>
            <Lang>EN</Lang>
            <TrayIcons>
              <svg width="7" height="4" viewBox="0 0 7 4"><path d="M0 4h7L3.500 0z" fill="#fff" /></svg>
              <svg width="14" height="16" viewBox="0 0 14 16" style={{ marginLeft: 3 }}>
                <path d="M7 2H1.500v12.500H8" fill="none" stroke="#fff" strokeWidth="1.400" /><path d="M4 5v7M6 9v3" stroke="#fff" strokeWidth="1.200" />
                <path d="M6 4.500h7.500V8q0 2-2.500 2.500V14H9v-3.500Q6 10 6 8zM7.500 1h1.300v3H7.500zM11 1h1.300v3H11z" fill="#fff" />
              </svg>
              <svg width="15" height="15" viewBox="0 0 15 15">
                <path d="M5 3h9v8H4V7" fill="none" stroke="#fff" strokeWidth="1.400" /><path d="M6 13.500h7M9.500 11v2" stroke="#fff" strokeWidth="1.500" /><path d="M.5 1v3.500h4V1M2.500 4v7" stroke="#fff" strokeWidth="1.200" fill="none" />
              </svg>
              <svg width="15" height="16" viewBox="0 0 15 16">
                <path d="M1 1v14" stroke="#fff" strokeWidth="1.500" /><path d="M2.500 1.500h6v1.500h5v6h-5V8h-6z" fill="#fff" />
                <circle cx="10.500" cy="11" r="4.500" fill="#dc2b20" /><path d="M8.800 9.300l3.400 3.400M12.200 9.300l-3.400 3.400" stroke="#fff" strokeWidth="1.300" />
              </svg>
              <svg width="8" height="13" viewBox="0 0 8 13"><path d="M0 4h2.500L7 0v13L2.500 9H0z" fill="#fff" /></svg>
            </TrayIcons>
            <Clock>6:21 PM<br />06/12/2018</Clock>
            <ShowDesktop />
          </Tray>
        </Taskbar>
      </Screen>
    </>
  );
}
